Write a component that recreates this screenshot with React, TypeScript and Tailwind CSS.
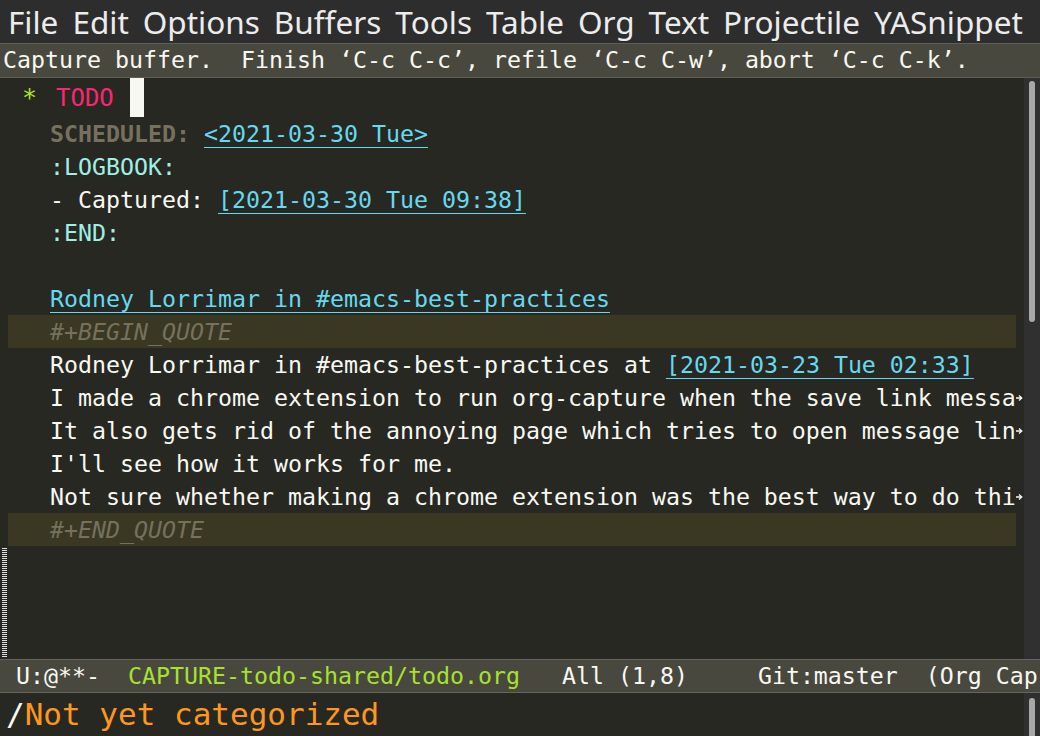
import React from "react";

const mono = "font-['DejaVu_Sans_Mono',monospace]";

function Arrow() {
  return (
    <svg width="7" height="8" viewBox="0 0 7 8" className="block">
      <path d="M0 4H5.5M3 1.5L5.8 4L3 6.5" stroke="#f8f8f2" strokeWidth="1.3" fill="none" />
    </svg>
  );
}

function Link({ children }: { children: React.ReactNode }) {
  return (
    <span className="text-[#66d9ef] underline decoration-1 underline-offset-[5px]">
      {children}
    </span>
  );
}

type Line = {
  body: React.ReactNode;
  band?: boolean;
  cont?: boolean;
};

const lines: Line[] = [
  {
    body: (
      <>
        {"   "}
        <span className="font-bold text-[#75715e]">SCHEDULED:</span> <Link>{"<2021-03-30 Tue>"}</Link>
      </>
    ),
  },
  { body: <span className="text-[#a1efe4]">{"   :LOGBOOK:"}</span> },
  {
    body: (
      <>
        {"   - Captured: "}
        <Link>[2021-03-30 Tue 09:38]</Link>
      </>
    ),
  },
  { body: <span className="text-[#a1efe4]">{"   :END:"}</span> },
  { body: "" },
  {
    body: (
      <>
        {"   "}
        <Link>Rodney Lorrimar in #emacs-best-practices</Link>
      </>
    ),
  },
  { body: <span className="italic text-[#75715e]">{"   #+BEGIN_QUOTE"}</span>, band: true },
  {
    body: (
      <>
        {"   Rodney Lorrimar in #emacs-best-practices at "}
        <Link>[2021-03-23 Tue 02:33]</Link>
      </>
    ),
  },
  { body: "   I made a chrome extension to run org-capture when the save link messa", cont: true },
  { body: "   It also gets rid of the annoying page which tries to open message lin", cont: true },
  { body: "   I'll see how it works for me." },
  { body: "   Not sure whether making a chrome extension was the best way to do thi", cont: true },
  { body: <span className="italic text-[#75715e]">{"   #+END_QUOTE"}</span>, band: true },
];

const menu = ["File", "Edit", "Options", "Buffers", "Tools", "Table", "Org", "Text", "Projectile", "YASnippet"];

export default function App() {
  return (
    <div className="flex h-[736px] w-[1040px] flex-col overflow-hidden bg-[#272822] text-[#f8f8f2]">
      {/* menu bar */}
      <div className="flex h-[43px] shrink-0 items-center gap-[14px] bg-[#2d2d2d] pl-[8px] font-['Noto_Sans',sans-serif] text-[31.5px] leading-none text-[#ececec]">
        {menu.map((m) => (
          <span key={m}>{m}</span>
        ))}
      </div>

      {/* header line */}
      <div
        className={`flex h-[35px] shrink-0 items-center border-y border-[#5f5e56] bg-[#49483e] pl-[3px] ${mono} text-[23.25px] whitespace-pre`}
      >
        Capture buffer.  Finish ‘C-c C-c’, refile ‘C-c C-w’, abort ‘C-c C-k’.
      </div>

      {/* window body */}
      <div className="flex min-h-0 flex-1">
        <div className="flex w-[8px] shrink-0 flex-col">
          <div className="h-[470px]" />
          <div className="ml-[2px] h-[109px] w-[5px] bg-[repeating-linear-gradient(to_bottom,#e0e0e0_0,#e0e0e0_1px,transparent_1px,transparent_2px)]" />
        </div>

        <div className={`min-w-0 flex-1 ${mono} text-[23.25px] whitespace-pre`}>
          {/* heading */}
          <div className="flex h-[39px] items-center">
            <span className="ml-[14px] w-[34px] text-[25px] text-[#a6e22e]">*</span>
            <span className="text-[24px] text-[#f92672]">TODO</span>
            <span className="ml-[16px] h-[39px] w-[14px] bg-[#f8f8f2]" />
          </div>
          {lines.map((l, i) => (
            <div
              key={i}
              className={`h-[33px] overflow-hidden leading-[33px] ${l.band ? "bg-[#3a3823]" : ""}`}
            >
              {l.body}
            </div>
          ))}
        </div>

        <div className="flex w-[8px] shrink-0 flex-col">
          <div className="h-[39px]" />
          {lines.map((l, i) => (
            <div key={i} className="flex h-[33px] items-center">
              {l.cont && <Arrow />}
            </div>
          ))}
        </div>

        <div className="w-[16px] shrink-0 bg-[#303030] pt-[3px]">
          <div className="ml-[5px] h-[241px] w-[6px] rounded-full bg-[#a8a8a8]" />
        </div>
      </div>

      {/* mode line */}
      <div
        className={`flex h-[34px] shrink-0 items-center border-y border-[#67665e] bg-[#49483e] pl-[2px] ${mono} text-[23.25px] whitespace-pre`}
      >
        <span>{" U:@**-  "}</span>
        <span className="text-[#a6e22e]">CAPTURE-todo-shared/todo.org</span>
        <span>{"   All (1,8)     Git:master  (Org Cap"}</span>
      </div>

      {/* minibuffer */}
      <div className="flex h-[43px] shrink-0">
        <div className={`flex flex-1 items-center pl-[6px] ${mono} text-[31px] whitespace-pre`}>
          <span className="text-[#f8f8f2]">/</span>
          <span className="text-[#fd971f]">Not yet categorized</span>
        </div>
        <div className="w-[16px] shrink-0 bg-[#303030] pt-[5px]">
          <div className="ml-[5px] h-[40px] w-[6px] rounded-full bg-[#a8a8a8]" />
        </div>
      </div>
    </div>
  );
}
